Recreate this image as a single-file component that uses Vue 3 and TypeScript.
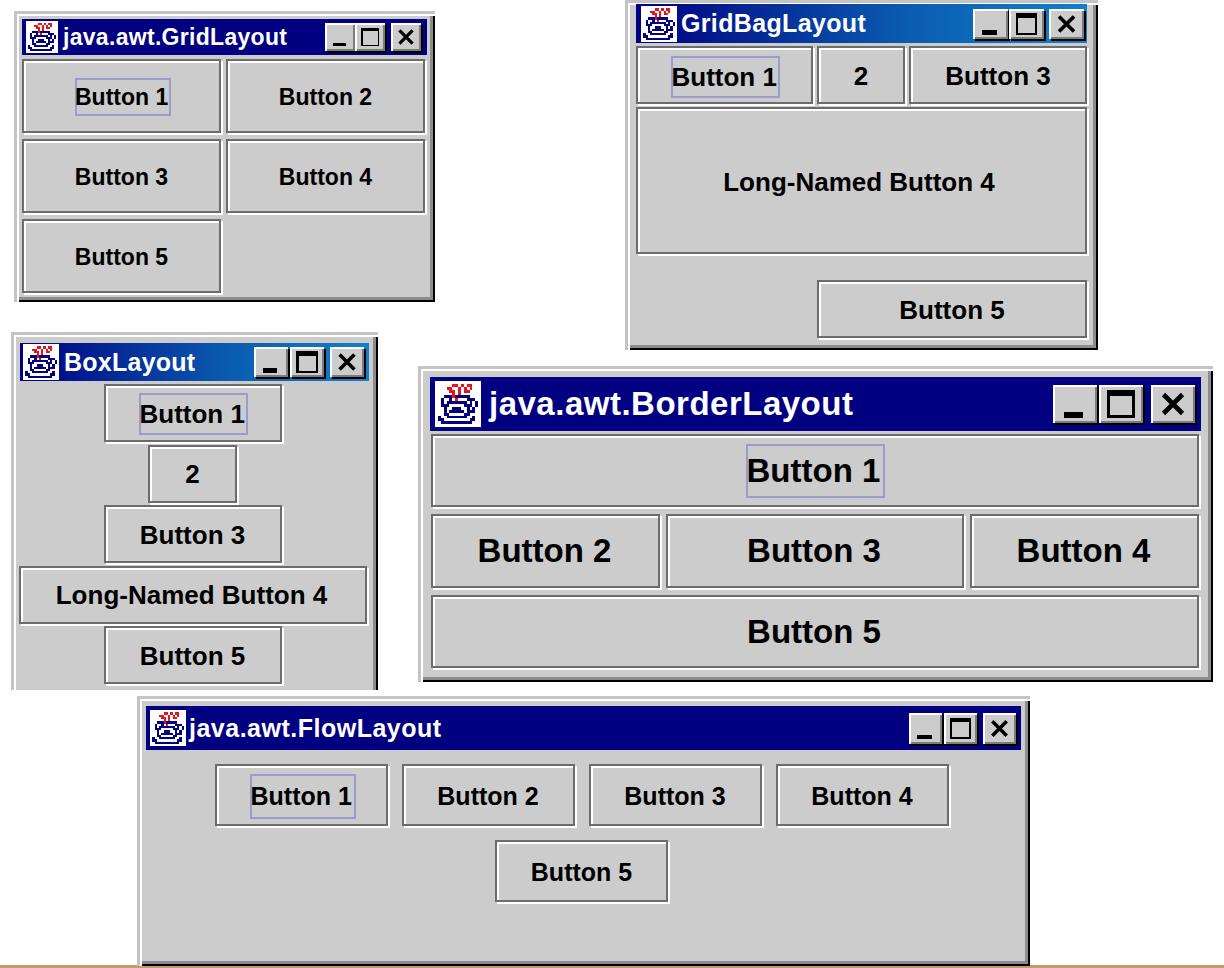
<template>
  <div class="page">
    <div class="desk">
      <div v-for="win in windows" :key="win.title" class="win" :class="win.cls">
        <div class="titlebar">
          <svg class="icon" viewBox="0 0 16 16" shape-rendering="crispEdges">
            <rect width="16" height="16" fill="#fff" />
            <rect v-for="(p, i) in pixels" :key="i" :x="p.x" :y="p.y" width="1" height="1" :fill="p.color" />
          </svg>
          <span class="title">{{ win.title }}</span>
          <div class="controls">
            <button class="ctl">
              <svg viewBox="0 0 16 14" shape-rendering="crispEdges"><rect x="4" y="10" width="7" height="2" fill="#000" /></svg>
            </button>
            <button class="ctl">
              <svg viewBox="0 0 16 14" shape-rendering="crispEdges">
                <path d="M3 2h10v10H3z M4 4v7h8V4z" fill="#000" fill-rule="evenodd" />
              </svg>
            </button>
            <button class="ctl close">
              <svg viewBox="0 0 16 14"><path d="M4.5 3.5l7 7M11.5 3.5l-7 7" stroke="#000" stroke-width="1.7" fill="none" /></svg>
            </button>
          </div>
        </div>
        <div class="body">
          <button v-for="(b, i) in win.buttons" :key="i" class="btn" :class="b.cls">
            <span :class="{ focus: b.focus }">{{ b.label }}</span>
          </button>
        </div>
      </div>
    </div>
    <div class="strip"></div>
  </div>
</template>

<script setup lang="ts">
interface Btn {
  label: string
  focus?: boolean
  cls?: string
}

const five = (): Btn[] => [
  { label: 'Button 1', focus: true },
  { label: 'Button 2' },
  { label: 'Button 3' },
  { label: 'Button 4' },
  { label: 'Button 5' },
]

const windows = [
  { title: 'java.awt.GridLayout', cls: 'w-grid', buttons: five() },
  {
    title: 'GridBagLayout',
    cls: 'w-bag fade',
    buttons: [
      { label: 'Button 1', focus: true },
      { label: '2' },
      { label: 'Button 3' },
      { label: 'Long-Named Button 4', cls: 'long' },
      { label: 'Button 5', cls: 'last' },
    ] as Btn[],
  },
  {
    title: 'BoxLayout',
    cls: 'w-box fade',
    buttons: [
      { label: 'Button 1', focus: true },
      { label: '2', cls: 'small' },
      { label: 'Button 3' },
      { label: 'Long-Named Button 4', cls: 'long' },
      { label: 'Button 5' },
    ] as Btn[],
  },
  {
    title: 'java.awt.BorderLayout',
    cls: 'w-border',
    buttons: [
      { label: 'Button 1', focus: true, cls: 'north' },
      { label: 'Button 2', cls: 'west' },
      { label: 'Button 3', cls: 'center' },
      { label: 'Button 4', cls: 'east' },
      { label: 'Button 5', cls: 'south' },
    ] as Btn[],
  },
  { title: 'java.awt.FlowLayout', cls: 'w-flow', buttons: five() },
]

// duke's coffee cup, 16x16
const iconRows = [
  '................',
  '......rr.r.rr...',
  '....rr..r.r.r...',
  '.....rr.r.rr....',
  '......r.r.......',
  '...nnnrnnnnn....',
  '..n..n.r...nnn..',
  '..n.nnnnnnn.n.n.',
  '..nnn.....nnn.n.',
  '...n..nnn..n.n..',
  '...n.nnnnn.nnn..',
  '...nn.....nn....',
  '.n..nnnnnnn..n..',
  '.nn.........nn..',
  '..nnnnnnnnnnn...',
  '................',
]

const pixels = iconRows.flatMap((row, y) =>
  [...row].flatMap((c, x) =>
    c === '.' ? [] : [{ x, y, color: c === 'r' ? '#e8141c' : '#000080' }],
  ),
)
</script>

<style scoped>
.page {
  display: flex;
  flex-direction: column;
  width: 1224px;
  height: 968px;
  overflow: hidden;
  background: #fff;
  font-family: "Liberation Sans", Arial, sans-serif;
}

.desk {
  position: relative;
  height: 965px;
}

.strip {
  height: 3px;
  background: #c79a68;
}

.win {
  position: absolute;
  box-sizing: border-box;
  display: flex;
  flex-direction: column;
  overflow: hidden;
  background: #ccc;
  box-shadow:
    inset 3px 3px 0 #c4c4c4,
    inset 5px 5px 0 #fff,
    inset -2px -2px 0 #000,
    inset -5px -5px 0 #8c8c8c;
}

.titlebar {
  display: flex;
  align-items: center;
  flex: none;
  background: #000080;
  color: #fff;
}

.fade .titlebar {
  background: linear-gradient(90deg, #000080 0%, #0a5cb0 60%, #1280cc 100%);
}

.icon {
  flex: none;
}

.title {
  font-weight: 700;
  white-space: nowrap;
}

.controls {
  display: flex;
  margin-left: auto;
}

.ctl {
  box-sizing: border-box;
  padding: 0;
  border: 0;
  background: #ccc;
  box-shadow:
    inset 2px 2px 0 #fff,
    inset -2px -2px 0 #7c7c7c,
    2px 2px 0 #000;
}

.ctl svg {
  display: block;
  width: 100%;
  height: 100%;
}

.body {
  flex: 1;
  min-height: 0;
}

.btn {
  box-sizing: border-box;
  display: flex;
  align-items: center;
  justify-content: center;
  padding: 0;
  border: 2px solid #6c6c6c;
  background: #ccc;
  color: #000;
  font-family: inherit;
  font-weight: 700;
  white-space: nowrap;
  box-shadow:
    inset 2px 2px 0 #fff,
    2px 2px 0 #fff;
}

.focus {
  box-sizing: border-box;
  border: 2px solid #9c9ccc;
  text-align: left;
  text-indent: -1px;
}

/* GridLayout */
.w-grid {
  left: 14px;
  top: 11px;
  width: 421px;
  height: 291px;
  padding: 8px 8px 0;
}

.w-grid .titlebar {
  height: 36px;
  padding: 0 6px 0 4px;
}

.w-grid .icon {
  width: 32px;
  height: 32px;
  margin-right: 5px;
}

.w-grid .title {
  font-size: 23px;
  letter-spacing: 0.3px;
}

.w-grid .ctl {
  width: 30px;
  height: 28px;
}

.w-grid .close {
  margin-left: 6px;
}

.w-grid .body {
  display: grid;
  grid-template-columns: 199px 199px;
  grid-template-rows: repeat(3, 74px);
  column-gap: 5px;
  row-gap: 6px;
  padding-top: 4px;
}

.w-grid .btn {
  padding-top: 2px;
  font-size: 23px;
}

.w-grid .focus {
  width: 96px;
  height: 38px;
  margin-left: 3px;
  line-height: 34px;
  text-indent: -2px;
}

/* GridBagLayout */
.w-bag {
  left: 625px;
  top: 0;
  width: 473px;
  height: 350px;
  padding: 4px 11px 0;
}

.w-bag .titlebar {
  height: 39px;
  padding: 0 3px 0 5px;
}

.w-bag .icon {
  width: 36px;
  height: 36px;
  margin-right: 4px;
}

.w-bag .title {
  font-size: 25px;
  letter-spacing: 0.35px;
}

.w-bag .ctl {
  width: 35px;
  height: 30px;
}

.w-bag .ctl + .ctl {
  margin-left: 1px;
}

.w-bag .close {
  margin-left: 5px !important;
}

.w-bag .body {
  display: grid;
  grid-template-columns: 177px 88px 178px;
  grid-template-rows: 58px 147px 58px;
  column-gap: 4px;
  row-gap: 3px;
  padding-top: 3px;
}

.w-bag .btn {
  padding-top: 3px;
  font-size: 26px;
}

.w-bag .long {
  grid-column: 1 / 4;
  padding-right: 5px;
}

.w-bag .last {
  grid-column: 2 / 4;
  grid-row: 3;
  margin-top: 23px;
  padding-top: 2px;
  height: 58px;
}

.w-bag .focus {
  width: 109px;
  height: 42px;
  margin-left: 1px;
  line-height: 38px;
}

/* BoxLayout: the capture stops at y 690, so the lower frame edge is cut off */
.w-box {
  left: 11px;
  top: 332px;
  width: 367px;
  height: 364px;
  padding: 11px 9px 0;
  clip-path: inset(0 0 6px 0);
}

.w-box .titlebar {
  height: 38px;
  padding: 0 5px 0 3px;
}

.w-box .icon {
  width: 36px;
  height: 36px;
  margin-right: 5px;
}

.w-box .title {
  font-size: 25px;
  letter-spacing: 0.25px;
}

.w-box .ctl {
  width: 34px;
  height: 30px;
}

.w-box .ctl + .ctl {
  margin-left: 2px;
}

.w-box .close {
  margin-left: 6px !important;
}

.w-box .body {
  display: flex;
  flex-direction: column;
  align-items: center;
  gap: 2.5px;
  margin: 0 2px 0 -2px;
  padding-top: 3px;
}

.w-box .btn {
  flex: none;
  width: 178px;
  height: 58px;
  padding-top: 2px;
  font-size: 26px;
}

.w-box .small {
  width: 89px;
}

.w-box .long {
  width: 348px;
  padding-right: 2px;
}

.w-box .focus {
  width: 109px;
  height: 42px;
  margin-left: 1px;
  line-height: 38px;
}

/* BorderLayout */
.w-border {
  left: 418px;
  top: 366px;
  width: 795px;
  height: 316px;
  padding: 11px 12px 0;
}

.w-border .titlebar {
  height: 54px;
  padding: 0 6px 0 5px;
}

.w-border .icon {
  width: 46px;
  height: 46px;
  margin-right: 8px;
}

.w-border .title {
  font-size: 33px;
  letter-spacing: 0.5px;
}

.w-border .ctl {
  width: 44px;
  height: 38px;
}

.w-border .ctl + .ctl {
  margin-left: 2px;
}

.w-border .close {
  margin-left: 8px !important;
}

.w-border .body {
  display: grid;
  grid-template-columns: 229px 298px 229px;
  grid-template-rows: 73px 74px 73px;
  grid-template-areas:
    "north north north"
    "west center east"
    "south south south";
  column-gap: 6px;
  row-gap: 7px;
  padding: 3px 0 0 1px;
}

.w-border .btn {
  padding-right: 2px;
  font-size: 33px;
}

.w-border .north { grid-area: north; padding-right: 0; }
.w-border .west { grid-area: west; }
.w-border .center { grid-area: center; }
.w-border .east { grid-area: east; }
.w-border .south { grid-area: south; }

.w-border .focus {
  width: 139px;
  height: 54px;
  line-height: 50px;
}

/* FlowLayout */
.w-flow {
  left: 137px;
  top: 696px;
  width: 893px;
  height: 270px;
  padding: 10px 9px 0;
}

.w-flow .titlebar {
  height: 44px;
  padding: 0 5px 0 4px;
}

.w-flow .icon {
  width: 36px;
  height: 36px;
  margin-right: 3px;
}

.w-flow .title {
  font-size: 25px;
  letter-spacing: 0.5px;
}

.w-flow .ctl {
  width: 33px;
  height: 31px;
}

.w-flow .ctl + .ctl {
  margin-left: 2px;
}

.w-flow .close {
  margin-left: 6px !important;
}

.w-flow .body {
  display: flex;
  flex-wrap: wrap;
  align-content: flex-start;
  justify-content: center;
  gap: 14px;
  padding: 14px 72px 0 68px;
}

.w-flow .btn {
  width: 173px;
  height: 62px;
  padding-top: 2px;
  font-size: 25px;
}

.w-flow .focus {
  width: 106px;
  height: 45px;
  margin-left: 3px;
  line-height: 41px;
}
</style>
